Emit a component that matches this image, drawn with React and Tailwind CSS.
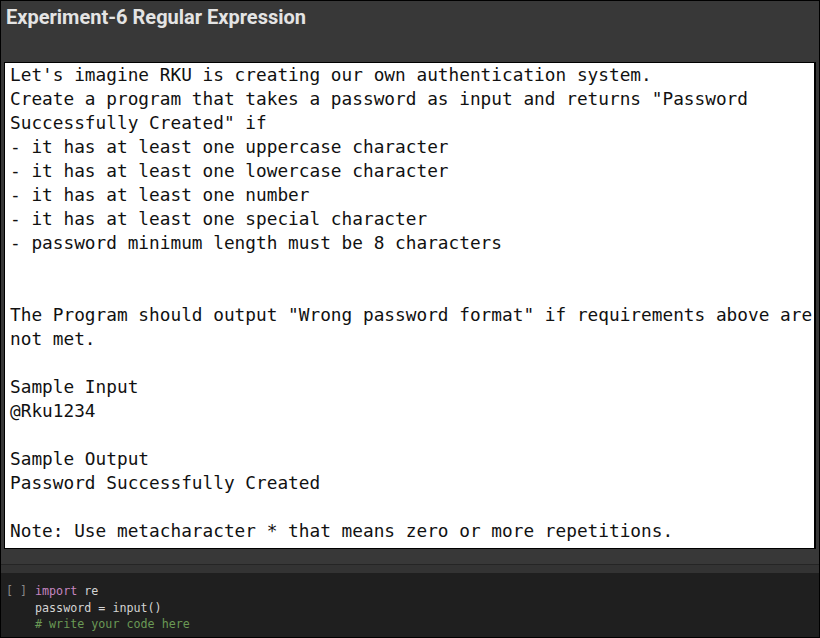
const LINES = [
  "Let's imagine RKU is creating our own authentication system.",
  'Create a program that takes a password as input and returns "Password',
  'Successfully Created" if',
  '- it has at least one uppercase character',
  '- it has at least one lowercase character',
  '- it has at least one number',
  '- it has at least one special character',
  '- password minimum length must be 8 characters',
  '',
  '',
  'The Program should output "Wrong password format" if requirements above are',
  'not met.',
  '',
  'Sample Input',
  '@Rku1234',
  '',
  'Sample Output',
  'Password Successfully Created',
  '',
  'Note: Use metacharacter * that means zero or more repetitions.',
]

export default function App() {
  return (
    <div className="w-[820px] h-[638px] border border-black bg-[#383838] flex flex-col overflow-hidden">
      {/* Title */}
      <div className="h-[61px] pl-[5px] pt-[4px]">
        <h1 className="font-['Roboto',sans-serif] font-bold text-[20px] leading-[24px] text-[#e4e4e4]">
          Experiment-6 Regular Expression
        </h1>
      </div>

      {/* Problem statement */}
      <div className="ml-[3px] w-[812px] bg-white border border-black border-r-2 pl-[5px] pb-[5px]">
        {LINES.map((line, i) => (
          <div
            key={i}
            className="h-[24px] leading-[24px] whitespace-pre font-['DejaVu_Sans_Mono',monospace] text-[17.78px] text-[#111111]"
          >
            {line}
          </div>
        ))}
      </div>

      {/* Divider */}
      <div className="h-[15px]" />
      <div className="h-px bg-[#252525]" />
      <div className="h-[8px] bg-[#333333]" />

      {/* Code cell */}
      <div className="flex-1 bg-[#1f1f1f] flex pt-[10px] font-['DejaVu_Sans_Mono',monospace] text-[11.7px] leading-[16.5px]">
        <div className="w-[34px] pl-[5px] text-[#8a8a8a] whitespace-pre">[ ]</div>
        <div className="whitespace-pre text-[#d4d4d4]">
          <div>
            <span className="text-[#c586c0]">import</span> re
          </div>
          <div>password = input()</div>
          <div className="text-[#6a9955]"># write your code here</div>
        </div>
      </div>
    </div>
  )
}
